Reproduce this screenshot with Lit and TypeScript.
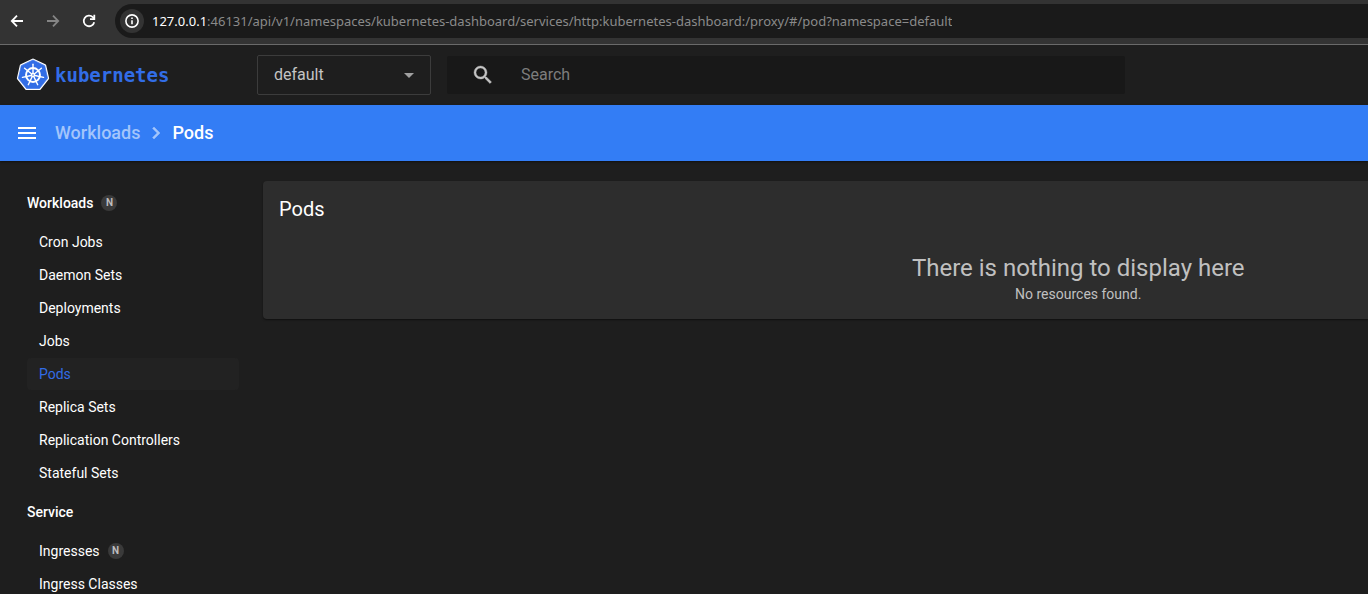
import { LitElement, html, svg, css, nothing } from "lit";
import { customElement, property } from "lit/decorators.js";
import { classMap } from "lit/directives/class-map.js";

interface NavItem {
  label: string;
  namespaced?: boolean;
}
interface NavGroup {
  title: string;
  namespaced?: boolean;
  items: NavItem[];
}

const NAV: NavGroup[] = [
  {
    title: "Workloads",
    namespaced: true,
    items: [
      { label: "Cron Jobs" },
      { label: "Daemon Sets" },
      { label: "Deployments" },
      { label: "Jobs" },
      { label: "Pods" },
      { label: "Replica Sets" },
      { label: "Replication Controllers" },
      { label: "Stateful Sets" },
    ],
  },
  {
    title: "Service",
    items: [{ label: "Ingresses", namespaced: true }, { label: "Ingress Classes" }],
  },
];

/* Browser chrome: navigation buttons and address bar */
@customElement("browser-bar")
export class BrowserBar extends LitElement {
  static styles = css`
    :host {
      display: flex;
      align-items: center;
      padding: 4px 0 6px 7px;
      background: #333333;
      border-bottom: 1px solid #6a6a6a;
    }
    .nav {
      display: flex;
      gap: 16px;
      margin-right: 16px;
    }
    button {
      display: flex;
      padding: 0;
      border: 0;
      background: none;
      color: #ffffff;
    }
    .nav button:disabled {
      color: #858585;
    }
    .address {
      flex: 1;
      display: flex;
      align-items: center;
      gap: 8px;
      min-width: 0;
      height: 34px;
      padding-left: 5px;
      box-sizing: border-box;
      border-radius: 17px 0 0 17px;
      background: #1a1a1a;
    }
    .info {
      align-items: center;
      justify-content: center;
      width: 24px;
      height: 24px;
      border-radius: 50%;
      background: #333333;
    }
    .url {
      white-space: nowrap;
      overflow: hidden;
      font: 13px/20px "Noto Sans", sans-serif;
      color: #8a8a8a;
    }
    .host {
      color: #ffffff;
    }
  `;

  render() {
    return html`
      <div class="nav">
        <button aria-label="Back">
          <svg width="20" height="20" viewBox="0 0 20 20" fill="none" stroke="currentColor" stroke-width="1.8">
            <path d="M16 10H5M10 4.7 4.8 10l5.2 5.3" />
          </svg>
        </button>
        <button aria-label="Forward" disabled>
          <svg width="20" height="20" viewBox="0 0 20 20" fill="none" stroke="currentColor" stroke-width="1.8">
            <path d="M4 10h11M10 4.7l5.2 5.3-5.2 5.3" />
          </svg>
        </button>
        <button aria-label="Reload">
          <svg width="20" height="20" viewBox="0 0 20 20" fill="none" stroke="currentColor" stroke-width="1.8">
            <path d="M15.2 11.2a5.3 5.3 0 1 1-1.4-5l1.6 1.6" />
            <path d="M15.3 3.8v4.3H11" />
          </svg>
        </button>
      </div>
      <div class="address">
        <button class="info" aria-label="View site information">
          <svg width="16" height="16" viewBox="0 0 16 16" fill="none" stroke="currentColor" stroke-width="1.6">
            <circle cx="8" cy="8" r="6.1" />
            <path d="M8 7.2v4M8 4.6v1.5" />
          </svg>
        </button>
        <div class="url" role="textbox" aria-label="Address"><span class="host">127.0.0.1</span>:46131/api/v1/namespaces/kubernetes-dashboard/services/http:kubernetes-dashboard:/proxy/#/pod?namespace=default</div>
      </div>
    `;
  }
}

/* Seven-sided badge with the ship's wheel, plus the wordmark */
@customElement("kube-logo")
export class KubeLogo extends LitElement {
  static styles = css`
    :host {
      display: block;
    }
    .logo {
      display: flex;
      align-items: center;
      gap: 5px;
      color: #326de6;
      text-decoration: none;
      font: bold 19px/32px "DejaVu Sans Mono", monospace;
    }
  `;

  private point(radius: number, turn: number) {
    const a = (turn / 7) * Math.PI * 2 - Math.PI / 2;
    return `${(17 + radius * Math.cos(a)).toFixed(2)} ${(17 + radius * Math.sin(a)).toFixed(2)}`;
  }

  render() {
    const turns = [0, 1, 2, 3, 4, 5, 6];
    const hull = turns.map((t) => this.point(15, t)).join(" ");
    return html`
      <a class="logo" href="#/workloads">
        <svg width="34" height="34" viewBox="0 0 34 34" aria-hidden="true">
          <polygon points=${hull} fill="#fff" stroke="#fff" stroke-width="3" stroke-linejoin="round" />
          <polygon points=${hull} fill="#326de6" stroke="#326de6" stroke-width="0.6" stroke-linejoin="round" />
          <circle cx="17" cy="17" r="7" fill="none" stroke="#fff" stroke-width="1.9" />
          ${turns.map(
            (t) => svg`<path d="M${this.point(2, t)}L${this.point(10.8, t)}" stroke="#fff" stroke-width="1.4" stroke-linecap="round" />`,
          )}
          <circle cx="17" cy="17" r="2.2" fill="#fff" />
          <circle cx="17" cy="17" r="0.8" fill="#326de6" />
        </svg>
        <span>kubernetes</span>
      </a>
    `;
  }
}

@customElement("side-nav")
export class SideNav extends LitElement {
  @property() active = "Pods";

  static styles = css`
    :host {
      display: block;
      font-size: 14px;
      line-height: 32px;
    }
    nav {
      display: flex;
      flex-direction: column;
      gap: 7px;
      padding: 26px 24px 0 27px;
    }
    .group {
      display: flex;
      align-items: center;
      gap: 8px;
      height: 32px;
      font-weight: 500;
    }
    ul {
      display: flex;
      flex-direction: column;
      gap: 1px;
      margin: 0;
      padding: 0;
      list-style: none;
    }
    a {
      color: #ffffff;
      text-decoration: none;
    }
    .item {
      display: flex;
      align-items: center;
      gap: 8px;
      height: 32px;
      padding-left: 12px;
      border-radius: 4px;
    }
    .active {
      background: #222222;
      color: #326de6;
    }
    .badge {
      width: 16px;
      height: 16px;
      border-radius: 50%;
      background: #3a3a3a;
      color: #bdbdbd;
      font-size: 10px;
      font-weight: 700;
      line-height: 16px;
      text-align: center;
    }
  `;

  private badge(show?: boolean) {
    return show ? html`<span class="badge">N</span>` : nothing;
  }

  render() {
    return html`
      <nav aria-label="Resources">
        ${NAV.map(
          (g) => html`
            <a class="group" href="#">${g.title}${this.badge(g.namespaced)}</a>
            <ul>
              ${g.items.map(
                (i) => html`<li>
                  <a class=${classMap({ item: true, active: i.label === this.active })} href="#"
                    >${i.label}${this.badge(i.namespaced)}</a
                  >
                </li>`,
              )}
            </ul>
          `,
        )}
      </nav>
    `;
  }
}

@customElement("app-root")
export class AppRoot extends LitElement {
  static styles = css`
    :host {
      display: flex;
      flex-direction: column;
      height: 100vh;
      overflow: hidden;
      background: #1e1e1e;
      color: #ffffff;
      font-family: Roboto, sans-serif;
    }
    .toolbar {
      flex: none;
      display: flex;
      align-items: center;
      height: 60px;
      padding: 0 16px;
    }
    .brand {
      flex: none;
      width: 241px;
    }
    .namespace {
      flex: none;
      display: grid;
      align-items: center;
      width: 174px;
      margin-right: 16px;
    }
    .namespace > * {
      grid-area: 1 / 1;
    }
    .namespace svg {
      justify-self: end;
      margin-right: 17px;
      pointer-events: none;
    }
    select {
      appearance: none;
      width: 100%;
      height: 40px;
      padding: 0 16px;
      border: 1px solid #3c3c3c;
      border-radius: 2px;
      background: transparent;
      color: #c4c4c4;
      font: 16px/24px Roboto, sans-serif;
    }
    .search {
      flex: 1;
      display: flex;
      align-items: center;
      gap: 26px;
      max-width: 678px;
      height: 38px;
      padding-left: 24px;
      box-sizing: border-box;
      border-radius: 2px;
      background: #181818;
      color: #c4c4c4;
    }
    .search input {
      flex: 1;
      min-width: 0;
      padding: 0;
      border: 0;
      outline: 0;
      background: none;
      color: #ffffff;
      font: 16px/24px Roboto, sans-serif;
    }
    .search input::placeholder {
      color: #7d7d7d;
    }
    .actionbar {
      flex: none;
      display: flex;
      align-items: center;
      height: 56px;
      padding: 0 15px;
      background: #337df5;
      box-shadow: 0 1px 2px rgba(0, 0, 0, 0.5);
      font-size: 18px;
      font-weight: 500;
      line-height: 24px;
    }
    .menu {
      display: flex;
      margin-right: 16px;
      padding: 0;
      border: 0;
      background: none;
      color: #ffffff;
    }
    .crumbs {
      display: flex;
      align-items: center;
      gap: 4px;
    }
    .crumbs a {
      color: #a3c5fb;
      text-decoration: none;
    }
    .body {
      flex: 1;
      display: flex;
      min-height: 0;
    }
    side-nav {
      flex: none;
      width: 263px;
      box-sizing: border-box;
    }
    main {
      flex: 1;
      min-width: 0;
      padding-top: 20px;
    }
    .card {
      padding-bottom: 15px;
      border-radius: 4px 0 0 4px;
      background: #2d2d2d;
      box-shadow: 0 1px 2px rgba(0, 0, 0, 0.5);
    }
    h1 {
      margin: 0;
      padding: 16px;
      font-size: 20px;
      font-weight: 400;
      line-height: 24px;
    }
    .empty {
      padding: 15px 16px 0 49%;
      text-align: center;
      color: #c0c0c0;
    }
    .empty p {
      margin: 0;
      font-size: 14px;
      line-height: 20px;
    }
    .empty .lead {
      font-size: 24px;
      line-height: 32px;
    }
  `;

  render() {
    return html`
      <browser-bar></browser-bar>
      <header class="toolbar">
        <kube-logo class="brand"></kube-logo>
        <div class="namespace">
          <select aria-label="Namespace">
            <option>default</option>
          </select>
          <svg width="10" height="5" viewBox="0 0 10 5" fill="#a0a0a0"><path d="M0 0h10L5 5z" /></svg>
        </div>
        <div class="search">
          <svg width="24" height="24" viewBox="0 0 24 24" fill="currentColor" stroke="currentColor" stroke-width="0.4" aria-hidden="true">
            <path
              d="M15.5 14h-.79l-.28-.27A6.471 6.471 0 0 0 16 9.5 6.5 6.5 0 1 0 9.5 16c1.61 0 3.09-.59 4.23-1.57l.27.28v.79l5 4.99L20.49 19l-4.99-5zm-6 0C7.01 14 5 11.99 5 9.5S7.01 5 9.5 5 14 7.01 14 9.5 11.99 14 9.5 14z"
            />
          </svg>
          <input type="text" aria-label="Search" placeholder="Search" />
        </div>
      </header>
      <div class="actionbar">
        <button class="menu" aria-label="Toggle navigation">
          <svg width="24" height="24" viewBox="0 0 24 24" fill="currentColor">
            <path d="M3 18h18v-2H3v2zm0-5h18v-2H3v2zm0-7v2h18V6H3z" />
          </svg>
        </button>
        <div class="crumbs">
          <a href="#">Workloads</a>
          <svg width="24" height="24" viewBox="0 0 24 24" fill="#a3c5fb" stroke="#a3c5fb" stroke-width="0.5" aria-hidden="true">
            <path d="M10 6 8.59 7.41 13.17 12l-4.58 4.59L10 18l6-6z" />
          </svg>
          <span>Pods</span>
        </div>
      </div>
      <div class="body">
        <side-nav active="Pods"></side-nav>
        <main>
          <section class="card">
            <h1>Pods</h1>
            <div class="empty">
              <p class="lead">There is nothing to display here</p>
              <p>No resources found.</p>
            </div>
          </section>
        </main>
      </div>
    `;
  }
}
